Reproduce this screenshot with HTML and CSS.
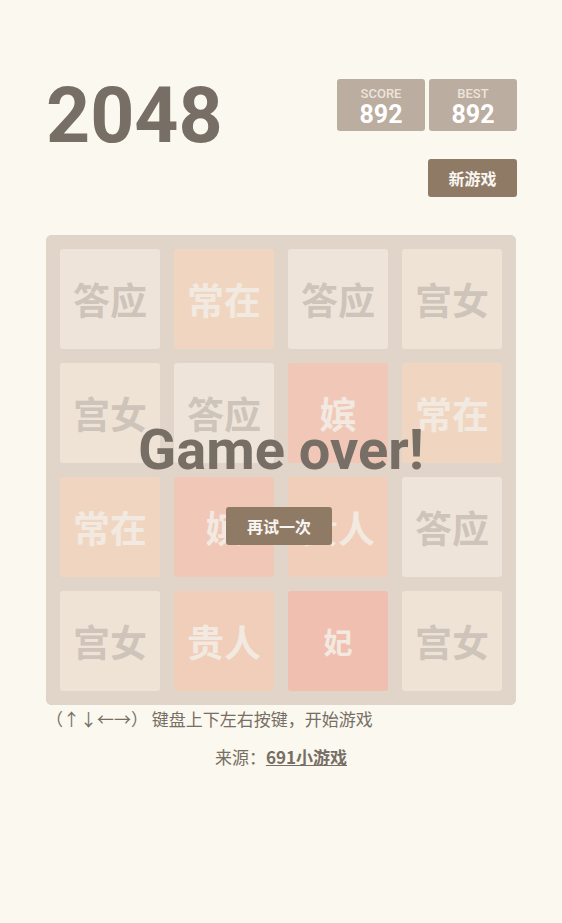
FILE: index.html
```html
<!DOCTYPE html>
<html lang="zh-CN">
<head>
<meta charset="utf-8">
<title>2048</title>
<link rel="stylesheet" href="styles.css">
</head>
<body>
<div class="container">
  <div class="heading">
    <h1 class="title">2048</h1>
    <div class="scores">
      <div class="score-box"><span class="score-label">SCORE</span><span class="score-value">892</span></div>
      <div class="score-box"><span class="score-label">BEST</span><span class="score-value">892</span></div>
    </div>
  </div>
  <div class="above-game">
    <a class="btn new-game">新游戏</a>
  </div>
  <div class="board">
    <div class="grid">
      <div class="tile t2">答应</div>
      <div class="tile t8">常在</div>
      <div class="tile t2">答应</div>
      <div class="tile t4">宫女</div>

      <div class="tile t4">宫女</div>
      <div class="tile t2">答应</div>
      <div class="tile t32">嫔</div>
      <div class="tile t8">常在</div>

      <div class="tile t8">常在</div>
      <div class="tile t32">嫔</div>
      <div class="tile t16">贵人</div>
      <div class="tile t2">答应</div>

      <div class="tile t4">宫女</div>
      <div class="tile t16">贵人</div>
      <div class="tile t64">妃</div>
      <div class="tile t4">宫女</div>
    </div>
    <div class="game-message">
      <p class="message-text">Game over!</p>
      <a class="btn retry">再试一次</a>
    </div>
  </div>
  <p class="instructions">（↑↓←→） 键盘上下左右按键，开始游戏</p>
  <p class="source">来源：<a class="source-link">691小游戏</a></p>
</div>
</body>
</html>
```

FILE: styles.css
```css
html, body {
  margin: 0;
  padding: 0;
  background: #faf8ef;
}
body {
  font-family: "Roboto", "Noto Sans CJK SC", sans-serif;
  color: #776e65;
  font-size: 16px;
}
.container {
  width: 470px;
  margin: 0 auto;
  padding-top: 77px;
}
.heading {
  display: flex;
  justify-content: space-between;
  align-items: flex-start;
  height: 79px;
}
.title {
  margin: 0;
  font-size: 77px;
  line-height: 79px;
  font-weight: 700;
  color: #776e65;
}
.scores {
  display: flex;
  gap: 4px;
  margin-top: 2px;
  margin-right: -1px;
}
.score-box {
  width: 88px;
  height: 52px;
  box-sizing: border-box;
  padding-top: 8px;
  background: #bbada0;
  border-radius: 3px;
  display: flex;
  flex-direction: column;
  align-items: center;
}
.score-label {
  font-size: 13px;
  line-height: 14px;
  font-weight: 500;
  color: #eee4da;
}
.score-value {
  font-size: 25px;
  line-height: 28px;
  font-weight: 700;
  color: #ffffff;
}
.above-game {
  display: flex;
  justify-content: flex-end;
  margin-top: 3px;
  margin-right: -1px;
}
.btn {
  display: inline-flex;
  align-items: center;
  justify-content: center;
  height: 38px;
  box-sizing: border-box;
  background: #8f7a66;
  color: #f9f6f2;
  border-radius: 3px;
  font-weight: 700;
  font-size: 16px;
  font-family: "Noto Sans CJK SC", sans-serif;
}
.new-game {
  width: 89px;
}
.board {
  position: relative;
  margin-top: 38px;
  width: 470px;
  height: 470px;
  box-sizing: border-box;
  padding: 14px;
  background: #bbada0;
  border-radius: 6px;
}
.grid {
  display: grid;
  grid-template-columns: repeat(4, 1fr);
  grid-template-rows: repeat(4, 1fr);
  gap: 14px;
  height: 100%;
}
.tile {
  border-radius: 3px;
  display: flex;
  align-items: center;
  justify-content: center;
  font-family: "Noto Sans CJK SC", sans-serif;
  font-weight: 700;
  font-size: 37px;
  color: #f9f6f2;
}
.t2 { background: #eee4da; color: #776e65; }
.t4 { background: #ede0c8; color: #776e65; }
.t8 { background: #f2b179; }
.t16 { background: #f59563; }
.t32 { background: #f67c5f; }
.t64 { background: #f65e3b; font-size: 29px; }
.game-message {
  position: absolute;
  inset: 0;
  background: rgba(238, 228, 218, 0.73);
  border-radius: 6px;
  display: flex;
  flex-direction: column;
  align-items: center;
}
.message-text {
  margin: 185px 0 0;
  font-size: 56px;
  line-height: 60px;
  font-weight: 700;
  color: #776e65;
}
.retry {
  margin-top: 27px;
  margin-right: 4px;
  padding: 0 21px;
}
.instructions {
  margin: 0;
  font-size: 17px;
  line-height: 28px;
  font-family: "Noto Sans CJK SC", sans-serif;
}
.source {
  margin: 10px 0 0;
  font-size: 17px;
  line-height: 28px;
  text-align: center;
  font-family: "Noto Sans CJK SC", sans-serif;
}
.source-link {
  font-weight: 700;
  text-decoration: underline;
  color: #776e65;
}
```
